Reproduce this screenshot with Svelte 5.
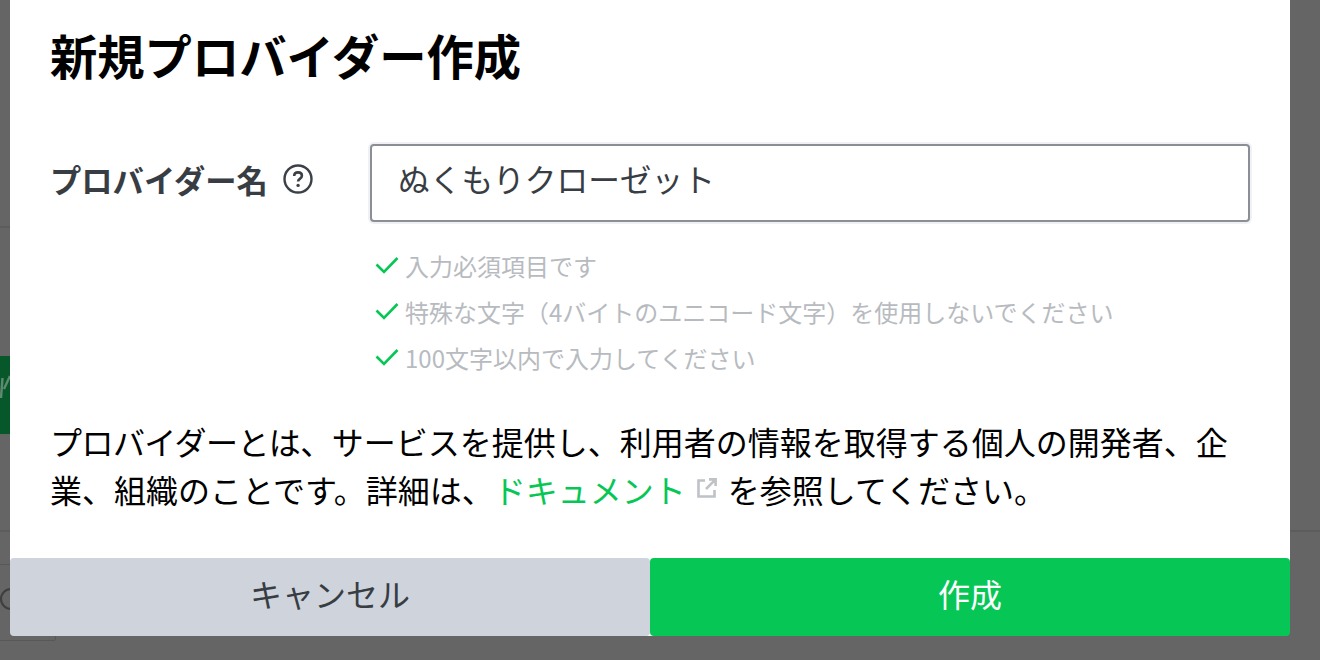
<script lang="ts">
  const rules = [
    '入力必須項目です',
    '特殊な文字（4バイトのユニコード文字）を使用しないでください',
    '100文字以内で入力してください',
  ];
</script>

<div class="page">
  <div class="behind">
    <span class="line l1"></span>
    <span class="green-block">
      <svg width="10" height="78" viewBox="0 0 10 78" fill="none">
        <path d="M2.5 22 1 42M10 20 4 33" stroke="#5f8a70" stroke-width="2.4"/>
      </svg>
    </span>
    <span class="line l3"></span>
    <span class="line r1"></span>
    <span class="box"></span>
    <span class="ring"></span>
  </div>

  <div class="modal">
    <div class="content">
      <h1>新規プロバイダー作成</h1>

      <div class="field">
        <div class="label">
          <span>プロバイダー名</span>
          <svg class="help" width="30" height="30" viewBox="0 0 30 30" fill="none">
            <circle cx="15" cy="15" r="13.5" stroke="#3c4148" stroke-width="2.4"/>
            <path d="M11.2 12c0-2.2 1.7-3.6 3.9-3.6s3.8 1.3 3.8 3.3c0 1.6-.9 2.4-2.1 3.2-1.1.7-1.7 1.3-1.7 2.6" stroke="#3c4148" stroke-width="2.6"/>
            <circle cx="15.1" cy="21.4" r="1.7" fill="#3c4148"/>
          </svg>
        </div>
        <div class="control">
          <input class="input" type="text" value="ぬくもりクローゼット" />
          <ul class="rules">
            {#each rules as rule}
              <li>
                <svg width="24" height="18" viewBox="0 0 24 18" fill="none">
                  <path d="M1.5 8.5 9 16 22.5 2" stroke="#06c755" stroke-width="2.6"/>
                </svg>
                <span>{rule}</span>
              </li>
            {/each}
          </ul>
        </div>
      </div>

      <p class="desc">
        <span class="tight">プロバイダーとは、</span>サービスを提供し、利用者の情報を取得する個人の開発者、企業、組織のことです。詳細は、<a href="#docs">ドキュメント<svg class="ext" width="20" height="20" viewBox="0 0 20 20" fill="none">
            <path d="M8 2.5H1.5v16h16V12" stroke="#bfc2c6" stroke-width="2.6"/>
            <path d="M12 1.4h6.6V8M18.6 1.4 9 11" stroke="#bfc2c6" stroke-width="2.6"/>
          </svg></a>を参照してください。
      </p>
    </div>

    <div class="actions">
      <button class="cancel">キャンセル</button>
      <button class="submit">作成</button>
    </div>
  </div>
</div>

<style>
  :global(body) {
    margin: 0;
    background: #656565;
  }

  .page {
    position: relative;
    width: 1320px;
    height: 660px;
    overflow: hidden;
    background: #656565;
    font-family: "Noto Sans CJK JP", "Noto Sans", sans-serif;
  }

  .line {
    position: absolute;
    height: 2px;
    background: #5c5c5c;
  }
  .l1 { left: 0; top: 226px; width: 10px; }
  .l3 { left: 0; top: 530px; width: 10px; }
  .r1 { left: 1290px; top: 530px; width: 30px; }

  .box {
    position: absolute;
    left: -10px;
    top: 564px;
    width: 64px;
    height: 75px;
    border: 1px solid #585858;
    border-radius: 2px;
  }

  .green-block {
    position: absolute;
    left: 0;
    top: 356px;
    width: 10px;
    height: 78px;
    background: #06582b;
  }

  .green-block svg {
    display: block;
  }

  .ring {
    position: absolute;
    left: 0;
    top: 588px;
    width: 18px;
    height: 18px;
    border: 2px solid #3e3e3e;
    border-radius: 50%;
  }

  .modal {
    position: absolute;
    left: 10px;
    top: 0;
    width: 1280px;
    height: 636px;
    display: flex;
    flex-direction: column;
    background: #fff;
    border-radius: 0 0 6px 6px;
  }

  .content {
    flex: 1;
    padding: 20px 40px 0;
    min-height: 0;
  }

  h1 {
    margin: 0;
    font-size: 47.3px;
    line-height: 70px;
    font-weight: 700;
    color: #000;
  }

  .field {
    display: flex;
    margin-top: 58px;
  }

  .label {
    width: 320px;
    flex-shrink: 0;
    display: flex;
    align-items: center;
    gap: 16px;
    height: 62px;
    font-size: 31.3px;
    font-weight: 700;
    color: #383d44;
  }

  .help {
    margin-left: -1px;
  }

  .control {
    flex: 1;
    min-width: 0;
  }

  .input {
    display: block;
    box-sizing: border-box;
    width: 100%;
    height: 78px;
    margin-top: -4px;
    padding: 0 26px 10px;
    border: 2px solid #8b8e94;
    border-radius: 4px;
    box-shadow: 0 0 0 2px #eff1f4;
    outline: none;
    font: inherit;
    font-size: 31.7px;
    color: #383d44;
    background: #fff;
  }

  .rules {
    list-style: none;
    margin: 20px 0 0;
    padding: 0;
  }

  .rules li {
    display: flex;
    align-items: center;
    gap: 6px;
    height: 46px;
    padding-left: 5px;
    font-size: 24px;
    color: #b7bbc0;
  }

  .desc {
    margin: 37px 0 0;
    font-size: 32px;
    line-height: 48px;
    color: #000;
  }

  .tight {
    letter-spacing: -0.55px;
  }

  .desc a {
    color: #06c755;
    text-decoration: none;
  }

  .ext {
    margin: 0 11px 0 11px;
    vertical-align: 5px;
  }

  .actions {
    display: flex;
    height: 78px;
    flex-shrink: 0;
  }

  .actions button {
    flex: 1;
    border: 0;
    padding: 0 0 8px;
    font: inherit;
    font-size: 32px;
  }

  .cancel {
    background: #cfd4dc;
    color: #383d44;
    border-radius: 4px;
  }

  .submit {
    background: #06c755;
    color: #fff;
    border-radius: 4px;
  }
</style>
